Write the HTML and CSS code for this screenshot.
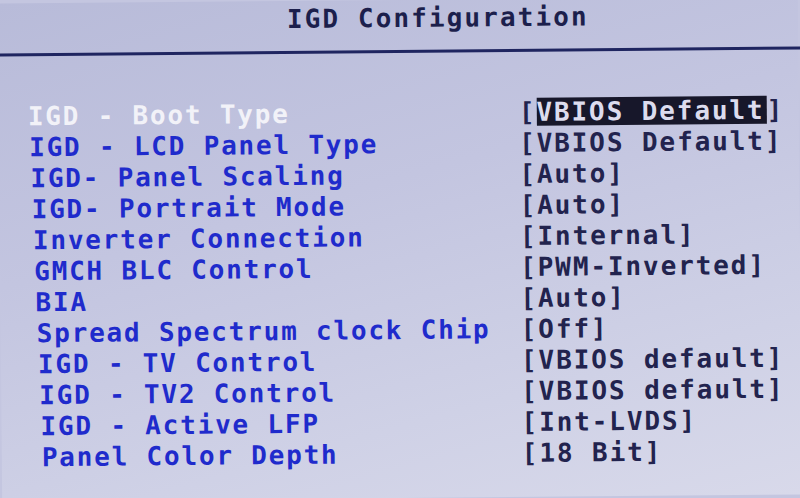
FILE: index.html
```html
<!DOCTYPE html>
<html lang="en">

<head>
    <meta charset="UTF-8">
    <meta name="viewport" content="width=device-width, initial-scale=1.0">
    <title>IGD Configuration</title>
    <link rel="stylesheet" href="styles.css">
</head>

<body>
    <div class="screen">
        <div class="title">IGD Configuration</div>
        <div class="rule"></div>
        <div class="items">
            <div class="item active"><span class="label">IGD - Boot Type</span><span class="value">[<span class="sel">VBIOS Default</span>]</span></div>
            <div class="item"><span class="label">IGD - LCD Panel Type</span><span class="value">[VBIOS Default]</span></div>
            <div class="item"><span class="label">IGD- Panel Scaling</span><span class="value">[Auto]</span></div>
            <div class="item"><span class="label">IGD- Portrait Mode</span><span class="value">[Auto]</span></div>
            <div class="item"><span class="label">Inverter Connection</span><span class="value">[Internal]</span></div>
            <div class="item"><span class="label">GMCH BLC Control</span><span class="value">[PWM-Inverted]</span></div>
            <div class="item"><span class="label">BIA</span><span class="value">[Auto]</span></div>
            <div class="item"><span class="label">Spread Spectrum clock Chip</span><span class="value">[Off]</span></div>
            <div class="item"><span class="label">IGD - TV Control</span><span class="value">[VBIOS default]</span></div>
            <div class="item"><span class="label">IGD - TV2 Control</span><span class="value">[VBIOS default]</span></div>
            <div class="item"><span class="label">IGD - Active LFP</span><span class="value">[Int-LVDS]</span></div>
            <div class="item"><span class="label">Panel Color Depth</span><span class="value">[18 Bit]</span></div>
        </div>
    </div>
</body>

</html>
```

FILE: styles.css
```css
* {
    margin: 0;
    padding: 0;
}

html, body {
    width: 800px;
    height: 498px;
    overflow: hidden;
    background-color: #c4c6e0;
}

.screen {
    width: 800px;
    height: 498px;
    transform: rotate(-0.5deg);
    background: linear-gradient(165deg, #b8bbd9 0%, #c3c5e0 40%, #cfd1e6 75%, #d8d9ea 100%);
    font-family: "DejaVu Sans Mono", "Liberation Mono", monospace;
    font-weight: bold;
    font-size: 26px;
}

.title {
    margin-left: 289px;
    line-height: 36px;
    letter-spacing: 2.1px;
    color: #1c1f4c;
}

.rule {
    margin: 14px -12px 0;
    height: 3px;
    background-color: #1f2560;
}

.items {
    margin-top: 45px;
}

.item {
    display: grid;
    grid-template-columns: 520px auto;
    height: 31px;
    line-height: 30px;
    white-space: pre;
}

.label {
    padding-left: calc(29px + var(--i, 0) * 1px);
    letter-spacing: 1.8px;
    color: #1f2bcc;
}

.active .label {
    color: #f2f2f8;
}

.value {
    letter-spacing: 1.9px;
    color: #22234e;
}

.sel {
    display: inline-block;
    height: 28px;
    line-height: 28px;
    padding-right: 2px;
    background-color: #17172a;
    color: #dcdcee;
}

.item:nth-child(2) { --i: 1; }
.item:nth-child(3) { --i: 2; }
.item:nth-child(4) { --i: 3; }
.item:nth-child(5) { --i: 4; }
.item:nth-child(6) { --i: 5; }
.item:nth-child(7) { --i: 6; }
.item:nth-child(8) { --i: 7; }
.item:nth-child(9) { --i: 8; }
.item:nth-child(10) { --i: 9; }
.item:nth-child(11) { --i: 10; }
.item:nth-child(12) { --i: 11; }
```
